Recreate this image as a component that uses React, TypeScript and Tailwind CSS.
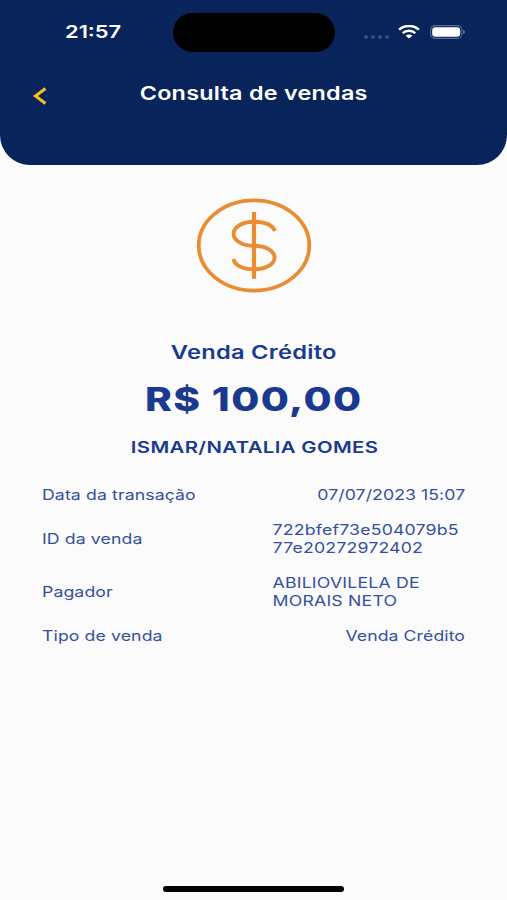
import React from 'react';

interface Detail {
  label: string;
  lines: string[];
}

const details: Detail[] = [
  { label: 'Data da transação', lines: ['07/07/2023 15:07'] },
  { label: 'ID da venda', lines: ['722bfef73e504079b5', '77e20272972402'] },
  { label: 'Pagador', lines: ['ABILIOVILELA DE', 'MORAIS NETO'] },
  { label: 'Tipo de venda', lines: ['Venda Crédito'] },
];

const WifiIcon: React.FC = () => (
  <svg width="22" height="14" viewBox="0 0 22 14" fill="none" stroke="white" strokeWidth="2.5">
    <path d="M1.1 4.7C6.6 -0.3 15.4 -0.3 20.9 4.7" />
    <path d="M4.7 8.1C8.2 5.1 13.8 5.1 17.3 8.1" />
    <path d="M7.6 10.7C9.5 9.1 12.5 9.1 14.4 10.7L11 13.6Z" fill="white" stroke="none" />
  </svg>
);

const BatteryIcon: React.FC = () => (
  <svg width="36" height="14" viewBox="0 0 36 14" fill="none">
    <rect x="0.6" y="0.6" width="31.3" height="12.8" rx="4.5" stroke="#5d6b90" strokeWidth="1.1" />
    <rect x="2.2" y="2.2" width="28" height="9.6" rx="3.2" fill="white" />
    <path d="M33.3 5C35.2 5.6 35.2 8.4 33.3 9Z" fill="#8791ac" />
  </svg>
);

const CoinIcon: React.FC = () => (
  <svg width="116" height="96" viewBox="0 0 116 96" fill="none" stroke="#e98d32">
    <ellipse cx="58" cy="47.5" rx="55.3" ry="45.1" strokeWidth="3.8" />
    <path d="M58 14V80.8" strokeWidth="4.2" />
    <path
      d="M79 33C76.5 27.5 69 23.8 58 23.8C46.5 23.8 37.6 29 37.6 35.8C37.6 42.6 46.5 47.8 58 47.8C69.5 47.8 78.6 52.8 78.6 59.6C78.6 66.4 69.5 71.3 58 71.3C46.5 71.3 38.3 67.2 37.6 61"
      strokeWidth="3.9"
    />
  </svg>
);

const App: React.FC = () => {
  return (
    <div className="flex h-[900px] w-[507px] flex-col overflow-hidden bg-[#fbfbfb] font-['Inter','Liberation_Sans',sans-serif] text-[#1a3a8f]">
      <header className="h-[165px] shrink-0 rounded-b-[30px] bg-[#08245b] text-white">
        <div className="flex h-[64px] items-center">
          <div className="w-[173px] pl-[65px]">
            <span className="inline-block origin-left scale-x-[1.23] text-[17.8px] font-semibold">21:57</span>
          </div>
          <div className="h-[39px] w-[162px] rounded-full bg-black" />
          <div className="flex items-center pl-[29px]">
            <div className="mt-[9px] flex gap-[3px]">
              {[0, 1, 2, 3].map((dot) => (
                <span key={dot} className="h-1 w-1 rounded-full bg-[#3b4f7d]" />
              ))}
            </div>
            <div className="ml-[9px]"><WifiIcon /></div>
            <div className="ml-[10px]"><BatteryIcon /></div>
          </div>
        </div>
        <div className="grid grid-cols-[60px_1fr_60px] pt-[15px]">
          <button className="flex justify-center pt-[8px] pl-[20px]">
            <svg width="14" height="18" viewBox="0 0 14 18" fill="none" stroke="#f5c518" strokeWidth="3">
              <path d="M12.5 1.5L2.5 9L12.5 16.5" />
            </svg>
          </button>
          <h1 className="pt-px text-center text-[19px] leading-[28px] font-semibold">
            <span className="inline-block scale-x-[1.23] tracking-[0.2px] whitespace-nowrap">Consulta de vendas</span>
          </h1>
        </div>
      </header>

      <main className="flex flex-1 flex-col items-center pt-[33px]">
        <CoinIcon />
        <h2 className="mt-[46px] scale-x-[1.28] text-[18.5px] leading-[24px] font-semibold tracking-[0.2px]">Venda Crédito</h2>
        <p className="mt-[16px] scale-x-[1.27] pl-px text-[32px] leading-[40px] font-extrabold tracking-[1.1px]">R$ 100,00</p>
        <p className="mt-[17px] scale-x-[1.27] pl-px text-[16px] leading-[20px] font-semibold tracking-[0.3px]">ISMAR/NATALIA GOMES</p>

        <dl className="mt-[29px] flex w-[423px] flex-col gap-[17px] text-[14.5px] leading-[18px] text-[#3550a0]">
          {details.map(({ label, lines }) => (
            <div key={label} className="flex items-center justify-between">
              <dt className="origin-left scale-x-[1.22] tracking-[0.08px]">{label}</dt>
              {lines.length > 1 ? (
                <dd className="w-[193px]">
                  {lines.map((line) => (
                    <div key={line} className="origin-left scale-x-[1.22] pl-[0.5px] tracking-[0.15px] whitespace-nowrap">{line}</div>
                  ))}
                </dd>
              ) : (
                <dd className="origin-right scale-x-[1.22] tracking-[0.05px]">{lines[0]}</dd>
              )}
            </div>
          ))}
        </dl>
      </main>

      <footer className="flex justify-center pb-[8px]">
        <div className="h-[6px] w-[181px] rounded-full bg-black" />
      </footer>
    </div>
  );
};

export default App;
